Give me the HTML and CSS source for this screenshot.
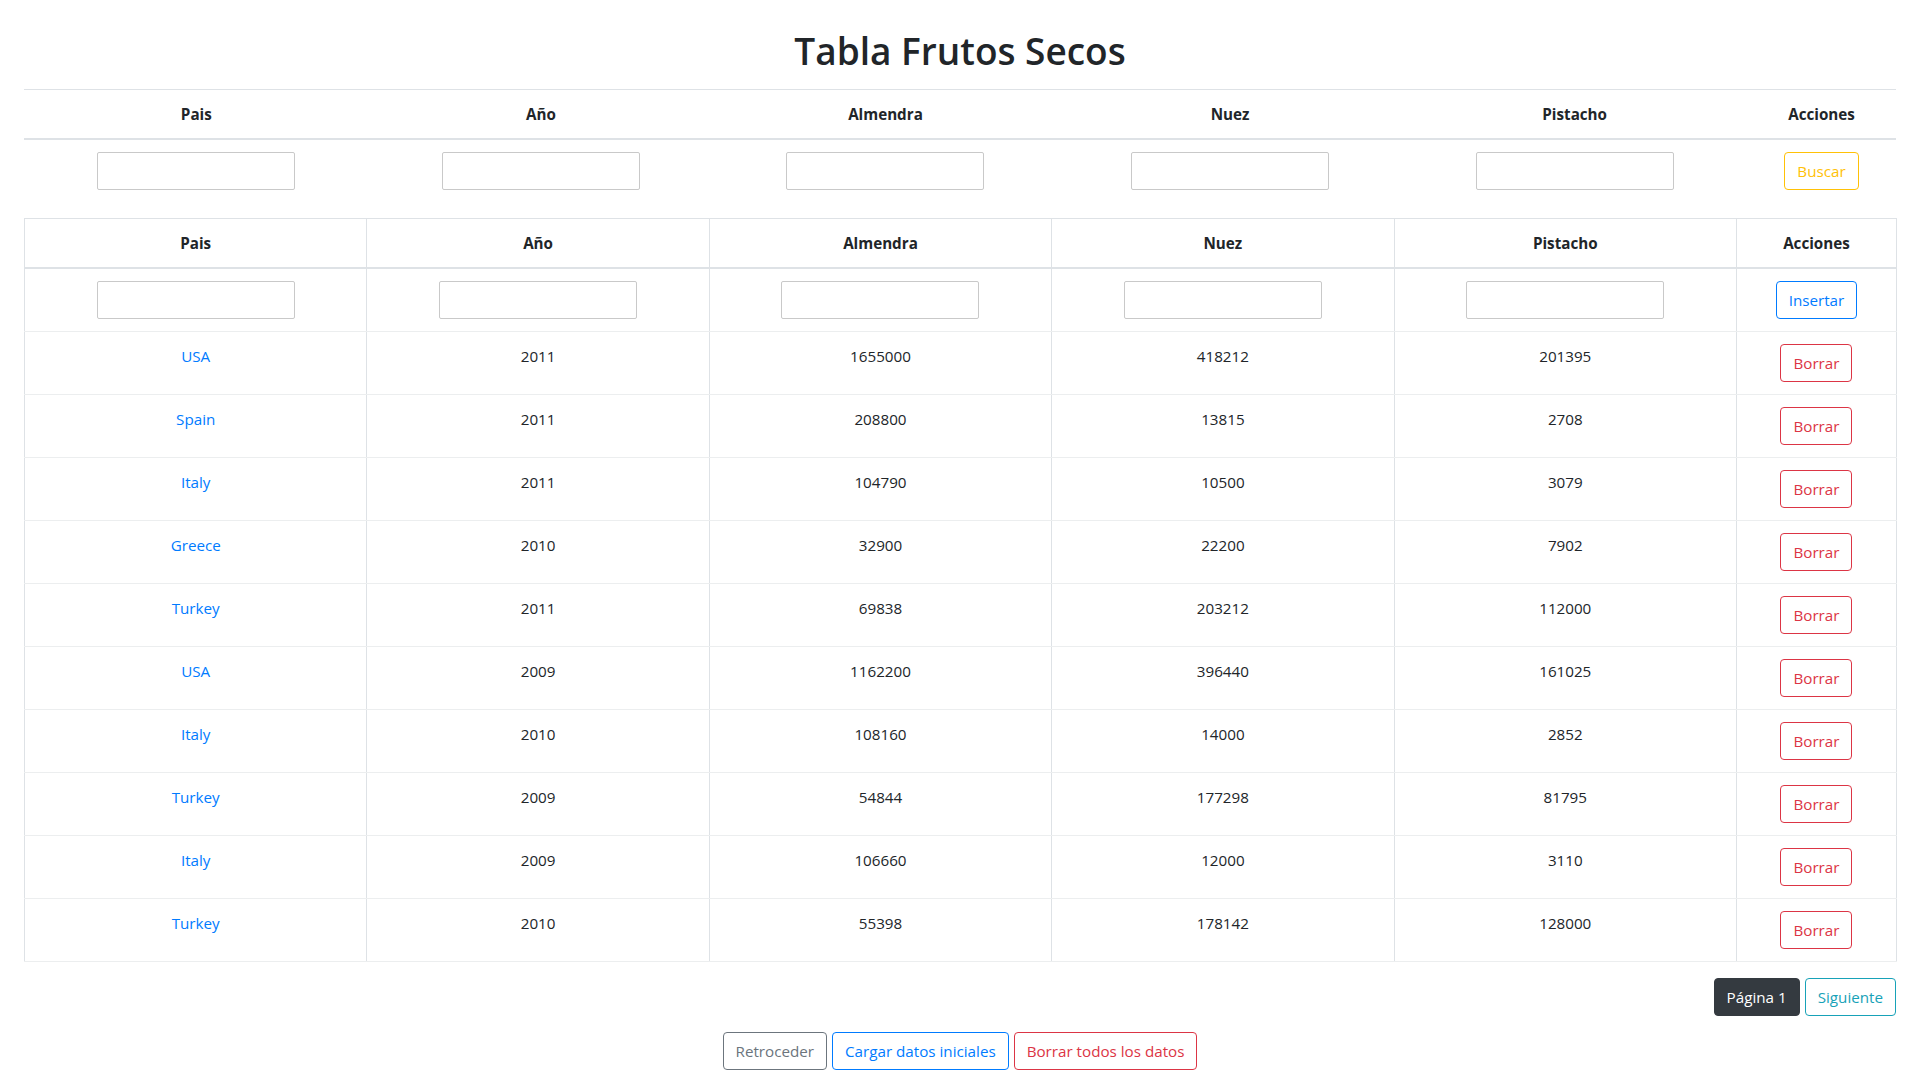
FILE: index.html
```html
<!DOCTYPE html>
<html lang="es">
<head>
<meta charset="utf-8">
<title>Tabla Frutos Secos</title>
<link rel="stylesheet" href="styles.css">
</head>
<body>
<div class="page">
  <h1 class="title">Tabla Frutos Secos</h1>

  <table class="table search-table">
    <colgroup>
      <col class="c-data"><col class="c-data"><col class="c-data"><col class="c-data"><col class="c-data"><col class="c-act">
    </colgroup>
    <thead>
      <tr><th>Pais</th><th>Año</th><th>Almendra</th><th>Nuez</th><th>Pistacho</th><th>Acciones</th></tr>
    </thead>
    <tbody>
      <tr>
        <td><input class="field" type="text"></td>
        <td><input class="field" type="text"></td>
        <td><input class="field" type="text"></td>
        <td><input class="field" type="text"></td>
        <td><input class="field" type="text"></td>
        <td><button class="btn btn-warning">Buscar</button></td>
      </tr>
    </tbody>
  </table>

  <table class="table table-bordered data-table">
    <colgroup>
      <col class="d-data"><col class="d-data"><col class="d-data"><col class="d-data"><col class="d-data"><col class="d-act">
    </colgroup>
    <thead>
      <tr><th>Pais</th><th>Año</th><th>Almendra</th><th>Nuez</th><th>Pistacho</th><th>Acciones</th></tr>
    </thead>
    <tbody>
      <tr>
        <td><input class="field" type="text"></td>
        <td><input class="field" type="text"></td>
        <td><input class="field" type="text"></td>
        <td><input class="field" type="text"></td>
        <td><input class="field" type="text"></td>
        <td><button class="btn btn-primary">Insertar</button></td>
      </tr>
      <tr><td><a class="country" href="#">USA</a></td><td>2011</td><td>1655000</td><td>418212</td><td>201395</td><td><button class="btn btn-danger">Borrar</button></td></tr>
      <tr><td><a class="country" href="#">Spain</a></td><td>2011</td><td>208800</td><td>13815</td><td>2708</td><td><button class="btn btn-danger">Borrar</button></td></tr>
      <tr><td><a class="country" href="#">Italy</a></td><td>2011</td><td>104790</td><td>10500</td><td>3079</td><td><button class="btn btn-danger">Borrar</button></td></tr>
      <tr><td><a class="country" href="#">Greece</a></td><td>2010</td><td>32900</td><td>22200</td><td>7902</td><td><button class="btn btn-danger">Borrar</button></td></tr>
      <tr><td><a class="country" href="#">Turkey</a></td><td>2011</td><td>69838</td><td>203212</td><td>112000</td><td><button class="btn btn-danger">Borrar</button></td></tr>
      <tr><td><a class="country" href="#">USA</a></td><td>2009</td><td>1162200</td><td>396440</td><td>161025</td><td><button class="btn btn-danger">Borrar</button></td></tr>
      <tr><td><a class="country" href="#">Italy</a></td><td>2010</td><td>108160</td><td>14000</td><td>2852</td><td><button class="btn btn-danger">Borrar</button></td></tr>
      <tr><td><a class="country" href="#">Turkey</a></td><td>2009</td><td>54844</td><td>177298</td><td>81795</td><td><button class="btn btn-danger">Borrar</button></td></tr>
      <tr><td><a class="country" href="#">Italy</a></td><td>2009</td><td>106660</td><td>12000</td><td>3110</td><td><button class="btn btn-danger">Borrar</button></td></tr>
      <tr><td><a class="country" href="#">Turkey</a></td><td>2010</td><td>55398</td><td>178142</td><td>128000</td><td><button class="btn btn-danger">Borrar</button></td></tr>
    </tbody>
  </table>

  <div class="pager">
    <button class="btn btn-dark">Página 1</button>
    <button class="btn btn-info">Siguiente</button>
  </div>

  <div class="actions">
    <button class="btn btn-secondary">Retroceder</button>
    <button class="btn btn-primary">Cargar datos iniciales</button>
    <button class="btn btn-danger">Borrar todos los datos</button>
  </div>
</div>
</body>
</html>
```
FILE: styles.css
```css
* { box-sizing: border-box; }

html, body {
  margin: 0;
  padding: 0;
  background: #fff;
}

body {
  font-family: "Open Sans", "Noto Sans", sans-serif;
  font-size: 15.2px;
  line-height: 24px;
  color: #212529;
}

.page {
  padding: 27px 24px 0;
}

.title {
  margin: 0 0 14px;
  font-size: 37px;
  font-weight: 600;
  line-height: 48px;
  text-align: center;
  color: #212529;
}

.table {
  width: 100%;
  border-collapse: collapse;
  table-layout: fixed;
  margin-bottom: 16px;
}

.table th,
.table td {
  padding: 12px;
  text-align: center;
  vertical-align: top;
  border-top: 1px solid #dee2e6;
}

.table th {
  font-weight: 700;
}

.table thead th {
  border-bottom: 2px solid #dee2e6;
}

.search-table .c-data { width: 344.6px; }
.search-table .c-act { width: 149px; }

.data-table .d-data { width: 342.4px; }
.data-table .d-act { width: 160px; }

.table-bordered {
  border: 1px solid #dee2e6;
}

.table-bordered th,
.table-bordered td {
  border: 1px solid #dee2e6;
}

.table-bordered tbody td {
  border-top-color: #eceeef;
  border-bottom-color: #eceeef;
}

.table-bordered thead th {
  border-bottom: 2px solid #dee2e6;
}

.field {
  display: inline-block;
  width: 198px;
  height: 38px;
  margin: 0;
  padding: 1px 2px;
  border: 1px solid #c9c9c9;
  border-radius: 2px;
  background: #fff;
  font: inherit;
  vertical-align: top;
}

.country {
  color: #007bff;
  text-decoration: none;
}

.btn {
  display: inline-block;
  height: 38px;
  margin: 0;
  padding: 6px 12px;
  border: 1px solid transparent;
  border-radius: 4px;
  background: transparent;
  font-family: inherit;
  font-size: 15.2px;
  line-height: 24px;
  font-weight: 400;
  text-align: center;
  vertical-align: top;
  cursor: pointer;
}

.btn-warning { color: #ffc107; border-color: #ffc107; }
.btn-primary { color: #007bff; border-color: #007bff; }
.btn-danger { color: #dc3545; border-color: #dc3545; }
.btn-secondary { color: #6c757d; border-color: #6c757d; }
.btn-info { color: #17a2b8; border-color: #17a2b8; }
.btn-dark { color: #fff; background: #343a40; border-color: #343a40; }

.pager {
  display: flex;
  justify-content: flex-end;
  gap: 5px;
  margin-bottom: 16px;
}

.actions {
  display: flex;
  justify-content: center;
  gap: 5px;
}
```
